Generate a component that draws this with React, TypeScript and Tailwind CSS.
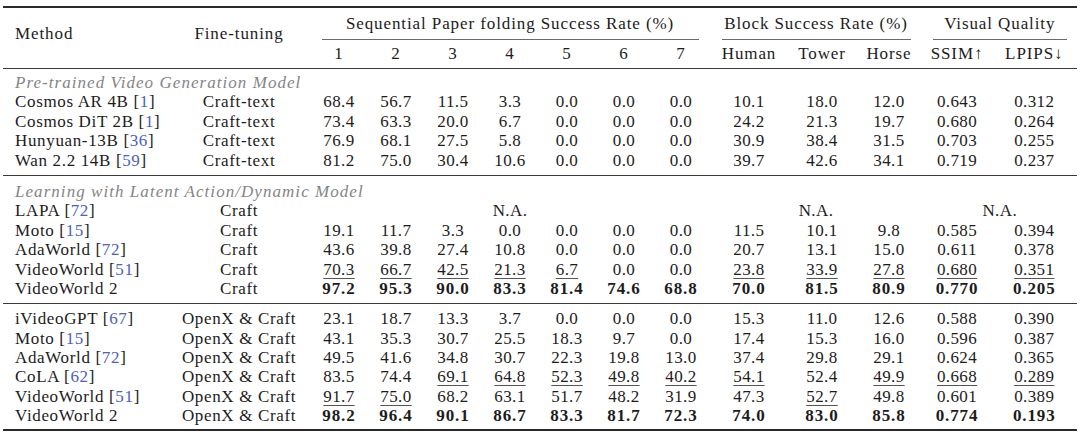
const cols =
  "grid grid-cols-[164.5px_143px_repeat(7,57px)_79px_67px_67px_69px_85.5px]";

type Row = {
  name: string;
  cite?: string;
  ft: string;
  values?: string[];
};

const pretrained: Row[] = [
  {
    name: "Cosmos AR 4B",
    cite: "1",
    ft: "Craft-text",
    values: ["68.4", "56.7", "11.5", "3.3", "0.0", "0.0", "0.0", "10.1", "18.0", "12.0", "0.643", "0.312"],
  },
  {
    name: "Cosmos DiT 2B",
    cite: "1",
    ft: "Craft-text",
    values: ["73.4", "63.3", "20.0", "6.7", "0.0", "0.0", "0.0", "24.2", "21.3", "19.7", "0.680", "0.264"],
  },
  {
    name: "Hunyuan-13B",
    cite: "36",
    ft: "Craft-text",
    values: ["76.9", "68.1", "27.5", "5.8", "0.0", "0.0", "0.0", "30.9", "38.4", "31.5", "0.703", "0.255"],
  },
  {
    name: "Wan 2.2 14B",
    cite: "59",
    ft: "Craft-text",
    values: ["81.2", "75.0", "30.4", "10.6", "0.0", "0.0", "0.0", "39.7", "42.6", "34.1", "0.719", "0.237"],
  },
];

// "_" = second best (underlined), "*" = best (bold)
const latent: Row[] = [
  { name: "LAPA", cite: "72", ft: "Craft" },
  {
    name: "Moto",
    cite: "15",
    ft: "Craft",
    values: ["19.1", "11.7", "3.3", "0.0", "0.0", "0.0", "0.0", "11.5", "10.1", "9.8", "0.585", "0.394"],
  },
  {
    name: "AdaWorld",
    cite: "72",
    ft: "Craft",
    values: ["43.6", "39.8", "27.4", "10.8", "0.0", "0.0", "0.0", "20.7", "13.1", "15.0", "0.611", "0.378"],
  },
  {
    name: "VideoWorld",
    cite: "51",
    ft: "Craft",
    values: ["_70.3", "_66.7", "_42.5", "_21.3", "_6.7", "0.0", "0.0", "_23.8", "_33.9", "_27.8", "_0.680", "_0.351"],
  },
  {
    name: "VideoWorld 2",
    ft: "Craft",
    values: ["*97.2", "*95.3", "*90.0", "*83.3", "*81.4", "*74.6", "*68.8", "*70.0", "*81.5", "*80.9", "*0.770", "*0.205"],
  },
];

const openx: Row[] = [
  {
    name: "iVideoGPT",
    cite: "67",
    ft: "OpenX & Craft",
    values: ["23.1", "18.7", "13.3", "3.7", "0.0", "0.0", "0.0", "15.3", "11.0", "12.6", "0.588", "0.390"],
  },
  {
    name: "Moto",
    cite: "15",
    ft: "OpenX & Craft",
    values: ["43.1", "35.3", "30.7", "25.5", "18.3", "9.7", "0.0", "17.4", "15.3", "16.0", "0.596", "0.387"],
  },
  {
    name: "AdaWorld",
    cite: "72",
    ft: "OpenX & Craft",
    values: ["49.5", "41.6", "34.8", "30.7", "22.3", "19.8", "13.0", "37.4", "29.8", "29.1", "0.624", "0.365"],
  },
  {
    name: "CoLA",
    cite: "62",
    ft: "OpenX & Craft",
    values: ["83.5", "74.4", "_69.1", "_64.8", "_52.3", "_49.8", "_40.2", "_54.1", "52.4", "_49.9", "_0.668", "_0.289"],
  },
  {
    name: "VideoWorld",
    cite: "51",
    ft: "OpenX & Craft",
    values: ["_91.7", "_75.0", "68.2", "63.1", "51.7", "48.2", "31.9", "47.3", "_52.7", "49.8", "0.601", "0.389"],
  },
  {
    name: "VideoWorld 2",
    ft: "OpenX & Craft",
    values: ["*98.2", "*96.4", "*90.1", "*86.7", "*83.3", "*81.7", "*72.3", "*74.0", "*83.0", "*85.8", "*0.774", "*0.193"],
  },
];

function Value({ v }: { v: string }) {
  if (v.startsWith("*")) {
    return <span className="font-bold tracking-[0.9px]">{v.slice(1)}</span>;
  }
  if (v.startsWith("_")) {
    return (
      <span className="underline decoration-[#555] decoration-1 underline-offset-[3px]">
        {v.slice(1)}
      </span>
    );
  }
  return <span>{v}</span>;
}

function TableRow({ row }: { row: Row }) {
  return (
    <div className={`${cols} h-[19.4px]`}>
      <div className="pl-3 whitespace-nowrap tracking-[0.65px]">
        {row.name}
        {row.cite && (
          <>
            {" "}[<span className="text-[#4a62c0]">{row.cite}</span>]
          </>
        )}
      </div>
      <div className="text-center whitespace-nowrap tracking-[0.65px]">{row.ft}</div>
      {row.values ? (
        row.values.map((v, i) => (
          <div key={i} className="text-center">
            <Value v={v} />
          </div>
        ))
      ) : (
        <>
          <div className="col-span-7 text-center">N.A.</div>
          <div className="col-span-3 text-center">N.A.</div>
          <div className="col-span-2 text-center">N.A.</div>
        </>
      )}
    </div>
  );
}

function SectionLabel({ children }: { children: string }) {
  return (
    <div className="h-[19.4px] pl-3 italic text-[#858585] tracking-[1.05px] whitespace-nowrap">
      {children}
    </div>
  );
}

function Header() {
  const sub = ["1", "2", "3", "4", "5", "6", "7", "Human", "Tower", "Horse", "SSIM↑", "LPIPS↓"];
  return (
    <div className={`${cols} grid-rows-[31px_1px_28px] tracking-[0.9px]`}>
      <div className="row-span-3 pl-3 pt-[16px]">Method</div>
      <div className="row-span-3 pt-[16px] text-center">Fine-tuning</div>
      <div className="col-span-7 flex items-center justify-center whitespace-nowrap">
        Sequential Paper folding Success Rate (%)
      </div>
      <div className="col-span-3 flex items-center justify-center whitespace-nowrap">
        Block Success Rate (%)
      </div>
      <div className="col-span-2 flex items-center justify-center whitespace-nowrap">
        Visual Quality
      </div>
      <div className="col-span-7 mx-[11px] bg-[#6a6a6a]" />
      <div className="col-span-3 mx-[12px] bg-[#6a6a6a]" />
      <div className="col-span-2 mx-[10px] bg-[#6a6a6a]" />
      {sub.map((s) => (
        <div key={s} className="flex items-center justify-center whitespace-nowrap">
          {s}
        </div>
      ))}
    </div>
  );
}

export default function App() {
  return (
    <div className="h-[436px] w-[1080px] bg-white pt-[6px] pl-[3px] font-['Liberation_Serif',serif] text-[17px] leading-[19.4px] tracking-[0.4px] text-[#1c1c1c]">
      <div className="w-[1074px]">
        <div className="h-[2px] bg-[#2a2a2a]" />
        <Header />
        <div className="h-px bg-[#3a3a3a]" />

        <div className="pt-[4px] pb-[5px]">
          <SectionLabel>Pre-trained Video Generation Model</SectionLabel>
          {pretrained.map((r) => (
            <TableRow key={r.name} row={r} />
          ))}
        </div>
        <div className="h-px bg-[#3a3a3a]" />

        <div className="pt-[6px] pb-[5px]">
          <SectionLabel>Learning with Latent Action/Dynamic Model</SectionLabel>
          {latent.map((r) => (
            <TableRow key={r.name} row={r} />
          ))}
        </div>
        <div className="h-px bg-[#3a3a3a]" />

        <div className="pt-[5px] pb-[3.5px]">
          {openx.map((r) => (
            <TableRow key={r.name} row={r} />
          ))}
        </div>
        <div className="h-[2px] bg-[#2a2a2a]" />
      </div>
    </div>
  );
}
